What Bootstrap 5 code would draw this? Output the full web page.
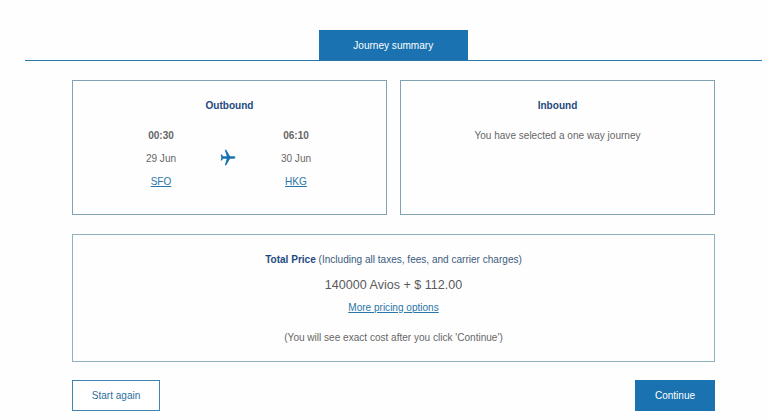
<!DOCTYPE html>
<html lang="en">
<head>
<meta charset="utf-8">
<title>Journey summary</title>
<link rel="stylesheet" href="https://cdn.jsdelivr.net/npm/bootstrap@5.3.0/dist/css/bootstrap.min.css">
<style>
html,body{height:420px;overflow:hidden}
body{font-family:"Liberation Sans",Arial,sans-serif;font-size:10.05px;line-height:13px;color:#666;background:#fefefe}
.page-wrap{padding:30px 6px 0 25px}
.tab-rule{border-bottom:1.5px solid #2a76a8;height:31px}
.tab-head{width:148.5px;height:30px;margin-left:294px;background:#1a72b0;color:#fff;line-height:31px}
.panes{padding:19px 47px 0}
.pane-row{gap:13px}
.pane{flex:1 1 0;height:135px;border:1px solid #7fa3b3;padding-top:18px}
.pane-title{color:#1f4a80;font-weight:700;margin-bottom:17px}
.leg-grid{padding-right:2px}
.stop{width:56px}
.stop div{height:13px;margin-bottom:10px}
.stop .clock{font-weight:700}
.plane-cell{width:79px;padding:20px 2px 0 0}
a.tlink{color:#2a76a8;text-decoration:underline}
.price-box{height:128px;border:1px solid #8fb0be;margin-top:18.5px;padding-top:18px}
.price-title{color:#3a5a80}
.price-title b{color:#1f4a80}
.price-amt{font-size:12.55px;line-height:15px;margin:12px 0 8px;color:#5a5a5a}
.price-note{margin-top:17px}
.action-row{margin-top:18.5px}
.btn-again,.btn-go{height:31px;font-size:10.05px;line-height:29px;padding:0;border-radius:0}
.btn-again{width:88px;border:1px solid #3f84ae;color:#2d6f9c;background:#fff}
.btn-go{width:80px;border:1px solid #1a72b0;background:#1a72b0;color:#fff}
</style>
</head>
<body>
<div class="page-wrap">
  <div class="tab-rule">
    <div class="tab-head text-center">Journey summary</div>
  </div>
  <div class="panes">
    <div class="d-flex pane-row">
      <div class="pane text-center">
        <div class="pane-title">Outbound</div>
        <div class="d-flex justify-content-center leg-grid">
          <div class="stop">
            <div class="clock">00:30</div>
            <div>29 Jun</div>
            <div><a class="tlink" href="#">SFO</a></div>
          </div>
          <div class="plane-cell">
            <svg width="16" height="17" viewBox="0 0 24 24" preserveAspectRatio="none" fill="#1a72b0" aria-hidden="true"><path d="M23 12c0-1-1-1.700-2.300-1.700h-5.700L9.300 1H7.200l2.900 9.300H4.600L2.700 7.700H1l1 4.300-1 4.300h1.700l1.900-2.600h5.500L7.200 23h2.100l5.700-9.300h5.700C22 13.700 23 13 23 12z"/></svg>
          </div>
          <div class="stop">
            <div class="clock">06:10</div>
            <div>30 Jun</div>
            <div><a class="tlink" href="#">HKG</a></div>
          </div>
        </div>
      </div>
      <div class="pane text-center">
        <div class="pane-title">Inbound</div>
        <div>You have selected a one way journey</div>
      </div>
    </div>
    <div class="price-box text-center">
      <div class="price-title"><b>Total Price</b> (Including all taxes, fees, and carrier charges)</div>
      <div class="price-amt">140000 Avios + $ 112.00</div>
      <div><a class="tlink" href="#">More pricing options</a></div>
      <div class="price-note">(You will see exact cost after you click 'Continue')</div>
    </div>
    <div class="d-flex justify-content-between action-row">
      <button type="button" class="btn btn-again">Start again</button>
      <button type="button" class="btn btn-go">Continue</button>
    </div>
  </div>
</div>
</body>
</html>
